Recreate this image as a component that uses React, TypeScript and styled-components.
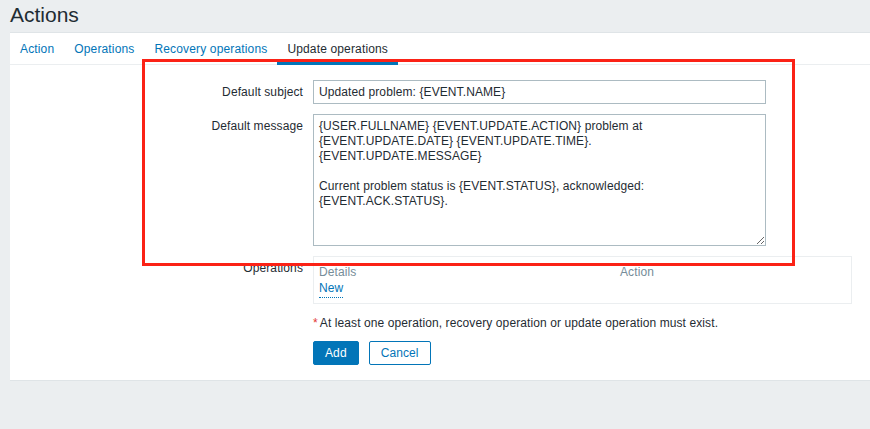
import React from 'react';
import styled, { createGlobalStyle } from 'styled-components';

const GlobalStyle = createGlobalStyle`
  html, body {
    margin: 0;
    padding: 0;
    background: #ebeef0;
  }
  body {
    font-family: Arial, "Liberation Sans", sans-serif;
    font-size: 12px;
    letter-spacing: 0.1px;
    color: #1f2c33;
  }
`;

const Page = styled.div`
  position: relative;
  min-height: 429px;
  overflow: hidden;
`;

const Header = styled.h1`
  margin: 0;
  padding: 3px 10px 5px;
  height: 32px;
  box-sizing: border-box;
  font-size: 21px;
  line-height: 24px;
  font-weight: normal;
  letter-spacing: 0;
  color: #1f2c33;
`;

const Panel = styled.div`
  margin-left: 10px;
  background: #ffffff;
  border-top: 1px solid #dfe4e7;
  border-bottom: 1px solid #dfe4e7;
`;

const TabList = styled.ul`
  display: flex;
  margin: 0;
  padding: 0;
  list-style: none;
  border-bottom: 1px solid #ebeef0;
`;

const Tab = styled.li<{ $active?: boolean }>`
  display: flex;
  align-items: center;
  height: 32px;
  box-sizing: border-box;
  margin-bottom: -1px;
  padding: 2px 10px 0;
  letter-spacing: 0.15px;
  border-bottom: 3px solid ${p => (p.$active ? '#0275b8' : 'transparent')};
  color: ${p => (p.$active ? '#1f2c33' : '#0275b8')};
  cursor: pointer;
`;

const Form = styled.div`
  display: grid;
  grid-template-columns: 293px 1fr;
  column-gap: 10px;
  row-gap: 10px;
  padding: 15px 0 15px;
`;

const Label = styled.label`
  text-align: right;
  padding-top: 5px;
  line-height: 14px;
  color: #1f2c33;
`;

const Field = styled.div<{ $col?: number }>`
  grid-column: ${p => p.$col ?? 'auto'};
`;

const TextInput = styled.input`
  display: block;
  width: 453px;
  height: 24px;
  box-sizing: border-box;
  margin: 0;
  padding: 0 5px;
  border: 1px solid #acbbc2;
  border-radius: 0;
  font-family: Arial, "Liberation Sans", sans-serif;
  font-size: 12px;
  letter-spacing: 0.1px;
  color: #1f2c33;
  outline: none;
`;

const TextArea = styled.textarea`
  display: block;
  width: 453px;
  height: 132px;
  box-sizing: border-box;
  margin: 0;
  padding: 4px 5px;
  border: 1px solid #acbbc2;
  border-radius: 0;
  font-family: Arial, "Liberation Sans", sans-serif;
  font-size: 12px;
  letter-spacing: 0.1px;
  line-height: 15px;
  color: #1f2c33;
  outline: none;
  white-space: pre-wrap;
`;

const OpsBox = styled.div`
  width: 539px;
  box-sizing: border-box;
  padding: 8px 5px 5px;
  border: 1px solid #ebeef0;
`;

const OpsRow = styled.div`
  display: grid;
  grid-template-columns: 301px 1fr;
  line-height: 14px;
`;

const OpsHead = styled.div`
  color: #768d99;
`;

const NewLink = styled.a`
  display: inline-block;
  margin-top: 2px;
  padding-bottom: 2px;
  line-height: 14px;
  color: #0275b8;
  text-decoration: none;
  border-bottom: 1px dotted #0275b8;
  cursor: pointer;
`;

const Note = styled.div`
  padding-top: 2px;
  line-height: 14px;
  color: #1f2c33;
`;

const Asterisk = styled.span`
  color: #e33734;
  margin-right: 2px;
`;

const Buttons = styled.div`
  display: flex;
  gap: 10px;
  margin-top: 1px;
`;

const Button = styled.button<{ $primary?: boolean }>`
  height: 24px;
  margin: 0;
  padding: 0 11px;
  border: 1px solid #0275b8;
  border-radius: 2px;
  background: ${p => (p.$primary ? '#0275b8' : '#ffffff')};
  color: ${p => (p.$primary ? '#ffffff' : '#0275b8')};
  font-family: Arial, "Liberation Sans", sans-serif;
  font-size: 12px;
  letter-spacing: 0.1px;
  cursor: pointer;
`;

const Highlight = styled.div`
  position: absolute;
  left: 142px;
  top: 59px;
  width: 653px;
  height: 207px;
  box-sizing: border-box;
  border: 3.5px solid #fb2216;
  pointer-events: none;
`;

const tabs = ['Action', 'Operations', 'Recovery operations', 'Update operations'];

const message =
  '{USER.FULLNAME} {EVENT.UPDATE.ACTION} problem at\n' +
  '{EVENT.UPDATE.DATE} {EVENT.UPDATE.TIME}.\n' +
  '{EVENT.UPDATE.MESSAGE}\n' +
  '\n' +
  'Current problem status is {EVENT.STATUS}, acknowledged:\n' +
  '{EVENT.ACK.STATUS}.';

const App: React.FC = () => {
  return (
    <Page>
      <GlobalStyle />
      <Header>Actions</Header>
      <Panel>
        <TabList>
          {tabs.map(t => (
            <Tab key={t} $active={t === 'Update operations'}>{t}</Tab>
          ))}
        </TabList>
        <Form>
          <Label>Default subject</Label>
          <Field>
            <TextInput defaultValue="Updated problem: {EVENT.NAME}" />
          </Field>

          <Label>Default message</Label>
          <Field>
            <TextArea defaultValue={message} spellCheck={false} />
          </Field>

          <Label>Operations</Label>
          <Field>
            <OpsBox>
              <OpsRow>
                <OpsHead>Details</OpsHead>
                <OpsHead>Action</OpsHead>
              </OpsRow>
              <OpsRow>
                <div>
                  <NewLink>New</NewLink>
                </div>
              </OpsRow>
            </OpsBox>
          </Field>

          <Field $col={2}>
            <Note>
              <Asterisk>*</Asterisk>At least one operation, recovery operation or update operation must exist.
            </Note>
          </Field>

          <Field $col={2}>
            <Buttons>
              <Button $primary>Add</Button>
              <Button>Cancel</Button>
            </Buttons>
          </Field>
        </Form>
      </Panel>
      <Highlight />
    </Page>
  );
};

export default App;
